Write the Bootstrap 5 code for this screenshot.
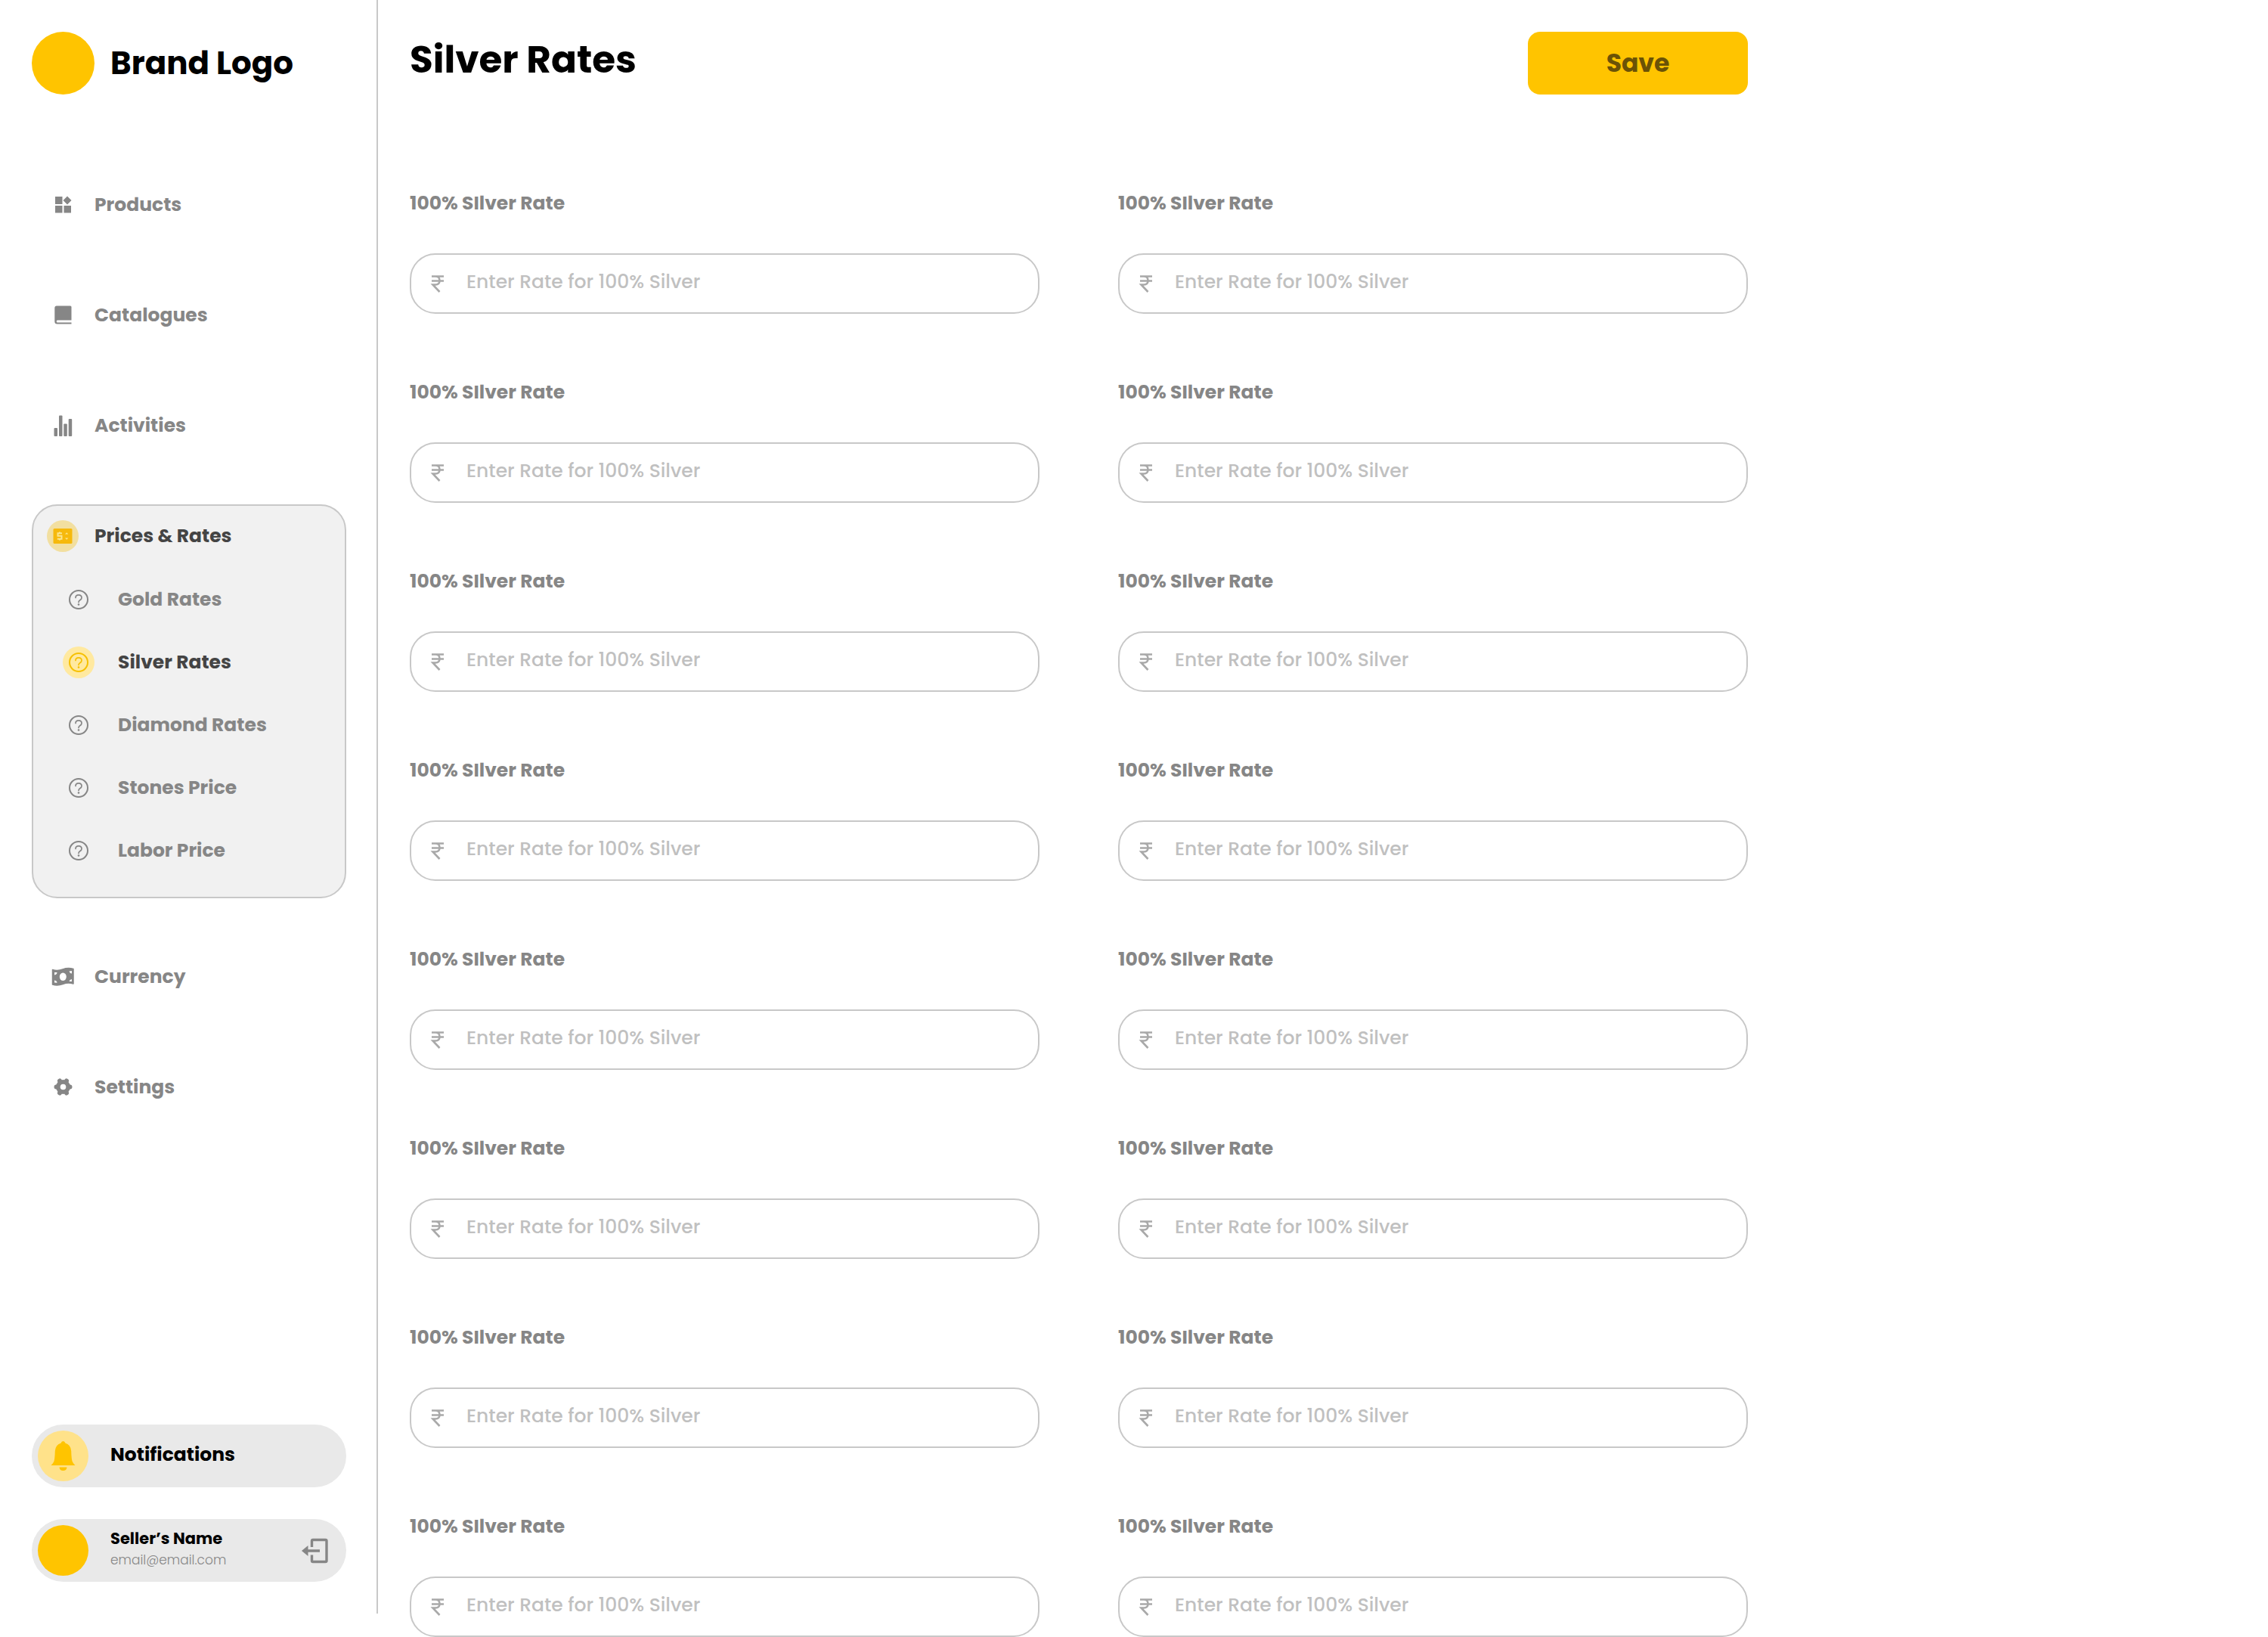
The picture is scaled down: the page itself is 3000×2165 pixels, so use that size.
<!DOCTYPE html>
<html lang="en">
<head>
<meta charset="utf-8">
<meta name="viewport" content="width=device-width, initial-scale=1">
<title>Silver Rates</title>
<link href="https://cdn.jsdelivr.net/npm/bootstrap@5.3.0/dist/css/bootstrap.min.css" rel="stylesheet">
<style>
  :root { --brand: #ffc400; --muted: #868686; --line: #c8c8c8; }
  body { font-family: Poppins, Inter, "Open Sans", sans-serif; font-size: 25px; line-height: 42px; color: #000; background: #fff; }
  a { color: inherit; text-decoration: none; }

  .sidebar { width: 500px; padding: 42px 40px 42px 42px; border-right: 2px solid var(--line); }
  .brand { gap: 21px; margin-bottom: 125px; font-size: 42px; }
  .brand-mark { width: 83px; height: 83px; background: var(--brand); }

  .side-nav { gap: 104px; }
  .side-link { gap: 21px; padding-left: 20px; font-weight: 700; color: var(--muted); }
  .side-link svg { width: 42px; height: 42px; flex: none; }
  .side-group { margin: -21px 0; padding: 19px 0 40px; background: #f1f1f1; border: 2px solid var(--line); border-radius: 34px; }
  .side-group .side-link { padding-left: 18px; }
  .side-group .side-list { gap: 41px; margin-top: 42px; }
  .side-group .side-list .side-link { padding-left: 39px; gap: 31px; }
  .side-link.active { color: #444; }

  .side-foot { gap: 42px; margin-top: 425px; }
  .pill { height: 83px; padding: 8px 24px 8px 8px; gap: 29px; background: #e9e9e9; color: #000; }
  .pill-mark { width: 67px; height: 67px; flex: none; }
  .pill-text { padding-bottom: 4px; }
  .seller-name { font-size: 21px; line-height: 28px; }
  .seller-mail { font-size: 17px; line-height: 28px; color: var(--muted); font-weight: 300; }
  .logout { width: 36px; height: 36px; color: var(--muted); }

  .content { max-width: 1854px; padding: 42px 42px 0; }
  .page-head { margin-bottom: 123px; }
  .page-title { font-size: 50px; line-height: 74px; }
  .save-btn { width: 291px; height: 83px; border-radius: 16px; background: var(--brand); color: #6b5206; font-size: 33px; font-weight: 700; }
  .save-btn:hover { background: #f0b800; color: #6b5206; }
  .rates { --bs-gutter-x: 104px; --bs-gutter-y: 83px; }
  .rate-label { display: block; margin-bottom: 45px; font-weight: 700; color: var(--muted); }
  .rate-box { height: 80px; padding: 0 25px; gap: 28px; border: 2px solid var(--line); border-radius: 34px; }
  .rate-box svg { width: 20px; height: 24px; flex: none; color: #a9a9a9; }
  .rate-box .form-control { height: 76px; padding: 0 0 4px; font-size: 25px; font-weight: 500; line-height: 42px; background: none; }
  .rate-box .form-control::placeholder { color: #c0c0c0; }
</style>
</head>
<body>
<svg class="d-none" aria-hidden="true">
  <symbol id="rupee" viewBox="0 0 20 24">
    <path d="M2 2.500H18M2 8.500H18M2 2.500H7Q12.500 2.500 12.500 8Q12.500 13.500 7 13.500H3.500L12.500 23" fill="none" stroke="currentColor" stroke-width="2.600"/>
  </symbol>
  <symbol id="question" viewBox="0 0 42 42">
    <circle cx="21" cy="21" r="12" fill="none" stroke="currentColor" stroke-width="2"/>
    <path d="M17 18.500Q17 14.800 21 14.800T25 18.500Q25 20.300 23 21.500Q21 22.800 21 24.500" fill="none" stroke="currentColor" stroke-width="1.700" stroke-linecap="round"/>
    <circle cx="21" cy="27.500" r="1.300" fill="currentColor"/>
  </symbol>
</svg>

<div class="d-flex align-items-start">
  <aside class="sidebar flex-shrink-0">
    <a href="#" class="brand d-flex align-items-center fw-bold">
      <span class="brand-mark rounded-circle"></span>Brand Logo
    </a>

    <nav class="side-nav d-flex flex-column">
      <a href="#" class="side-link d-flex align-items-center">
        <svg viewBox="0 0 42 42" fill="currentColor"><path d="M11 10h9.500v10H11zM11 22h9.500v9.500H11zM22.500 22H32v9.500h-9.500zM27 9.500l5.500 5.500-5.500 5.500-5.500-5.500z"/></svg>Products
      </a>
      <a href="#" class="side-link d-flex align-items-center">
        <svg viewBox="0 0 42 42" fill="currentColor"><path d="M13 8.500H31Q32.500 8.500 32.500 10V27.500H14Q12.700 27.500 12.700 29T14 30.500H32.500V32.500H13.500Q10.300 32.500 10.300 29V11.500Q10.300 8.500 13 8.500Z"/></svg>Catalogues
      </a>
      <a href="#" class="side-link d-flex align-items-center">
        <svg viewBox="0 0 42 42" fill="currentColor"><rect x="9.500" y="24" width="4.500" height="11" rx="1"/><rect x="16" y="7.500" width="4.500" height="27.500" rx="1"/><rect x="22.300" y="18.500" width="4.500" height="16.500" rx="1"/><rect x="28.700" y="12" width="4.500" height="23" rx="1"/></svg>Activities
      </a>

      <div class="side-group">
        <a href="#" class="side-link active d-flex align-items-center">
          <svg viewBox="0 0 42 42"><circle cx="21" cy="21" r="21" fill="#f2dfa0"/><rect x="8.500" y="11" width="25" height="20" rx="1.500" fill="#f6b90c"/><path d="M20 17.300H14.500V20.800H19.500V24.700H13.800M17 15.500V17.300M17 24.700V26.500" fill="none" stroke="#fbe58d" stroke-width="2"/><path d="M24 18.500l2.200-2.200 2.200 2.200zM24 23.500l2.200 2.200 2.200-2.200z" fill="#fbe58d"/></svg>Prices &amp; Rates
        </a>
        <div class="side-list d-flex flex-column">
          <a href="#" class="side-link d-flex align-items-center"><svg><use href="#question"/></svg>Gold Rates</a>
          <a href="#" class="side-link active d-flex align-items-center" aria-current="page"><svg viewBox="0 0 42 42" color="#f6c000"><circle cx="21" cy="21" r="21" fill="#ffe9a0"/><use href="#question"/></svg>Silver Rates</a>
          <a href="#" class="side-link d-flex align-items-center"><svg><use href="#question"/></svg>Diamond Rates</a>
          <a href="#" class="side-link d-flex align-items-center"><svg><use href="#question"/></svg>Stones Price</a>
          <a href="#" class="side-link d-flex align-items-center"><svg><use href="#question"/></svg>Labor Price</a>
        </div>
      </div>

      <a href="#" class="side-link d-flex align-items-center">
        <svg viewBox="0 0 42 42"><path d="M7.500 11.500Q14 13.500 21 11Q28 8.500 35 10.500V30Q28 28 21 30.500Q14 33 7.500 31Z" fill="currentColor" stroke="currentColor" stroke-width="1.500" stroke-linejoin="round"/><ellipse cx="21.300" cy="20.700" rx="4.500" ry="5.200" fill="#fff"/><path d="M10 15h3.500q0 2.800-3.500 3.500zM33 13v3.500q-3-.5-3.500-3zM10 25.500q3.300 .5 3.500 3.300l-3.500-.2zM33 24v3h-3.500q.5-2.500 3.500-3z" fill="#fff"/></svg>Currency
      </a>
      <a href="#" class="side-link d-flex align-items-center">
        <svg viewBox="0 0 42 42"><g stroke="currentColor" stroke-width="6" stroke-linecap="round"><path d="M12.500 20.500H30.500M17 12.500L26 28.500M26 12.500L17 28.500"/></g><circle cx="21.500" cy="20.500" r="9.500" fill="currentColor"/><circle cx="21.500" cy="20.500" r="3.800" fill="#fff"/></svg>Settings
      </a>
    </nav>

    <div class="side-foot d-flex flex-column">
      <a href="#" class="pill d-flex align-items-center rounded-pill fw-bold">
        <svg class="pill-mark" viewBox="0 0 67 67"><circle cx="33.500" cy="33.500" r="33.500" fill="#ffe28a"/><path d="M33.500 14Q35.800 14 36.300 16.500Q43.500 18.500 44.200 27Q44.500 39 46 41.500Q47 43.500 49.500 46H17.500Q20 43.500 21 41.500Q22.500 39 22.800 27Q23.500 18.500 30.700 16.500Q31.200 14 33.500 14ZM28.500 48.500H38.500Q38 53 33.500 53T28.500 48.500Z" fill="#ffc400"/></svg><span class="pill-text">Notifications</span>
      </a>
      <div class="pill d-flex align-items-center rounded-pill">
        <span class="pill-mark brand-mark rounded-circle"></span>
        <div class="pill-text flex-grow-1">
          <div class="seller-name fw-bold">Seller’s Name</div>
          <div class="seller-mail">email@email.com</div>
        </div>
        <button type="button" class="btn p-0 border-0 d-flex" aria-label="Log out">
          <svg class="logout" viewBox="0 0 36 36"><path d="M14.500 13V5Q14.500 3.500 16 3.500H32.500Q34 3.500 34 5V31Q34 32.500 32.500 32.500H16Q14.500 32.500 14.500 31V23.500M6 18H25" fill="none" stroke="currentColor" stroke-width="3.400"/><path d="M1 18L9.500 11V25Z" fill="currentColor"/></svg>
        </button>
      </div>
    </div>
  </aside>

  <main class="content flex-grow-1">
    <header class="page-head d-flex justify-content-between align-items-start">
      <h1 class="page-title fw-bold m-0">Silver Rates</h1>
      <button type="submit" form="rates-form" class="btn save-btn">Save</button>
    </header>

    <form id="rates-form" class="rates row row-cols-2">
      <div class="col"><label class="rate-label" for="rate1">100% SIlver Rate</label>
        <div class="rate-box d-flex align-items-center"><svg><use href="#rupee"/></svg><input id="rate1" type="text" class="form-control border-0" placeholder="Enter Rate for 100% Silver"></div></div>
      <div class="col"><label class="rate-label" for="rate2">100% SIlver Rate</label>
        <div class="rate-box d-flex align-items-center"><svg><use href="#rupee"/></svg><input id="rate2" type="text" class="form-control border-0" placeholder="Enter Rate for 100% Silver"></div></div>
      <div class="col"><label class="rate-label" for="rate3">100% SIlver Rate</label>
        <div class="rate-box d-flex align-items-center"><svg><use href="#rupee"/></svg><input id="rate3" type="text" class="form-control border-0" placeholder="Enter Rate for 100% Silver"></div></div>
      <div class="col"><label class="rate-label" for="rate4">100% SIlver Rate</label>
        <div class="rate-box d-flex align-items-center"><svg><use href="#rupee"/></svg><input id="rate4" type="text" class="form-control border-0" placeholder="Enter Rate for 100% Silver"></div></div>
      <div class="col"><label class="rate-label" for="rate5">100% SIlver Rate</label>
        <div class="rate-box d-flex align-items-center"><svg><use href="#rupee"/></svg><input id="rate5" type="text" class="form-control border-0" placeholder="Enter Rate for 100% Silver"></div></div>
      <div class="col"><label class="rate-label" for="rate6">100% SIlver Rate</label>
        <div class="rate-box d-flex align-items-center"><svg><use href="#rupee"/></svg><input id="rate6" type="text" class="form-control border-0" placeholder="Enter Rate for 100% Silver"></div></div>
      <div class="col"><label class="rate-label" for="rate7">100% SIlver Rate</label>
        <div class="rate-box d-flex align-items-center"><svg><use href="#rupee"/></svg><input id="rate7" type="text" class="form-control border-0" placeholder="Enter Rate for 100% Silver"></div></div>
      <div class="col"><label class="rate-label" for="rate8">100% SIlver Rate</label>
        <div class="rate-box d-flex align-items-center"><svg><use href="#rupee"/></svg><input id="rate8" type="text" class="form-control border-0" placeholder="Enter Rate for 100% Silver"></div></div>
      <div class="col"><label class="rate-label" for="rate9">100% SIlver Rate</label>
        <div class="rate-box d-flex align-items-center"><svg><use href="#rupee"/></svg><input id="rate9" type="text" class="form-control border-0" placeholder="Enter Rate for 100% Silver"></div></div>
      <div class="col"><label class="rate-label" for="rate10">100% SIlver Rate</label>
        <div class="rate-box d-flex align-items-center"><svg><use href="#rupee"/></svg><input id="rate10" type="text" class="form-control border-0" placeholder="Enter Rate for 100% Silver"></div></div>
      <div class="col"><label class="rate-label" for="rate11">100% SIlver Rate</label>
        <div class="rate-box d-flex align-items-center"><svg><use href="#rupee"/></svg><input id="rate11" type="text" class="form-control border-0" placeholder="Enter Rate for 100% Silver"></div></div>
      <div class="col"><label class="rate-label" for="rate12">100% SIlver Rate</label>
        <div class="rate-box d-flex align-items-center"><svg><use href="#rupee"/></svg><input id="rate12" type="text" class="form-control border-0" placeholder="Enter Rate for 100% Silver"></div></div>
      <div class="col"><label class="rate-label" for="rate13">100% SIlver Rate</label>
        <div class="rate-box d-flex align-items-center"><svg><use href="#rupee"/></svg><input id="rate13" type="text" class="form-control border-0" placeholder="Enter Rate for 100% Silver"></div></div>
      <div class="col"><label class="rate-label" for="rate14">100% SIlver Rate</label>
        <div class="rate-box d-flex align-items-center"><svg><use href="#rupee"/></svg><input id="rate14" type="text" class="form-control border-0" placeholder="Enter Rate for 100% Silver"></div></div>
      <div class="col"><label class="rate-label" for="rate15">100% SIlver Rate</label>
        <div class="rate-box d-flex align-items-center"><svg><use href="#rupee"/></svg><input id="rate15" type="text" class="form-control border-0" placeholder="Enter Rate for 100% Silver"></div></div>
      <div class="col"><label class="rate-label" for="rate16">100% SIlver Rate</label>
        <div class="rate-box d-flex align-items-center"><svg><use href="#rupee"/></svg><input id="rate16" type="text" class="form-control border-0" placeholder="Enter Rate for 100% Silver"></div></div>
    </form>
  </main>
</div>
<script src="https://cdn.jsdelivr.net/npm/bootstrap@5.3.0/dist/js/bootstrap.bundle.min.js"></script>
</body>
</html>
